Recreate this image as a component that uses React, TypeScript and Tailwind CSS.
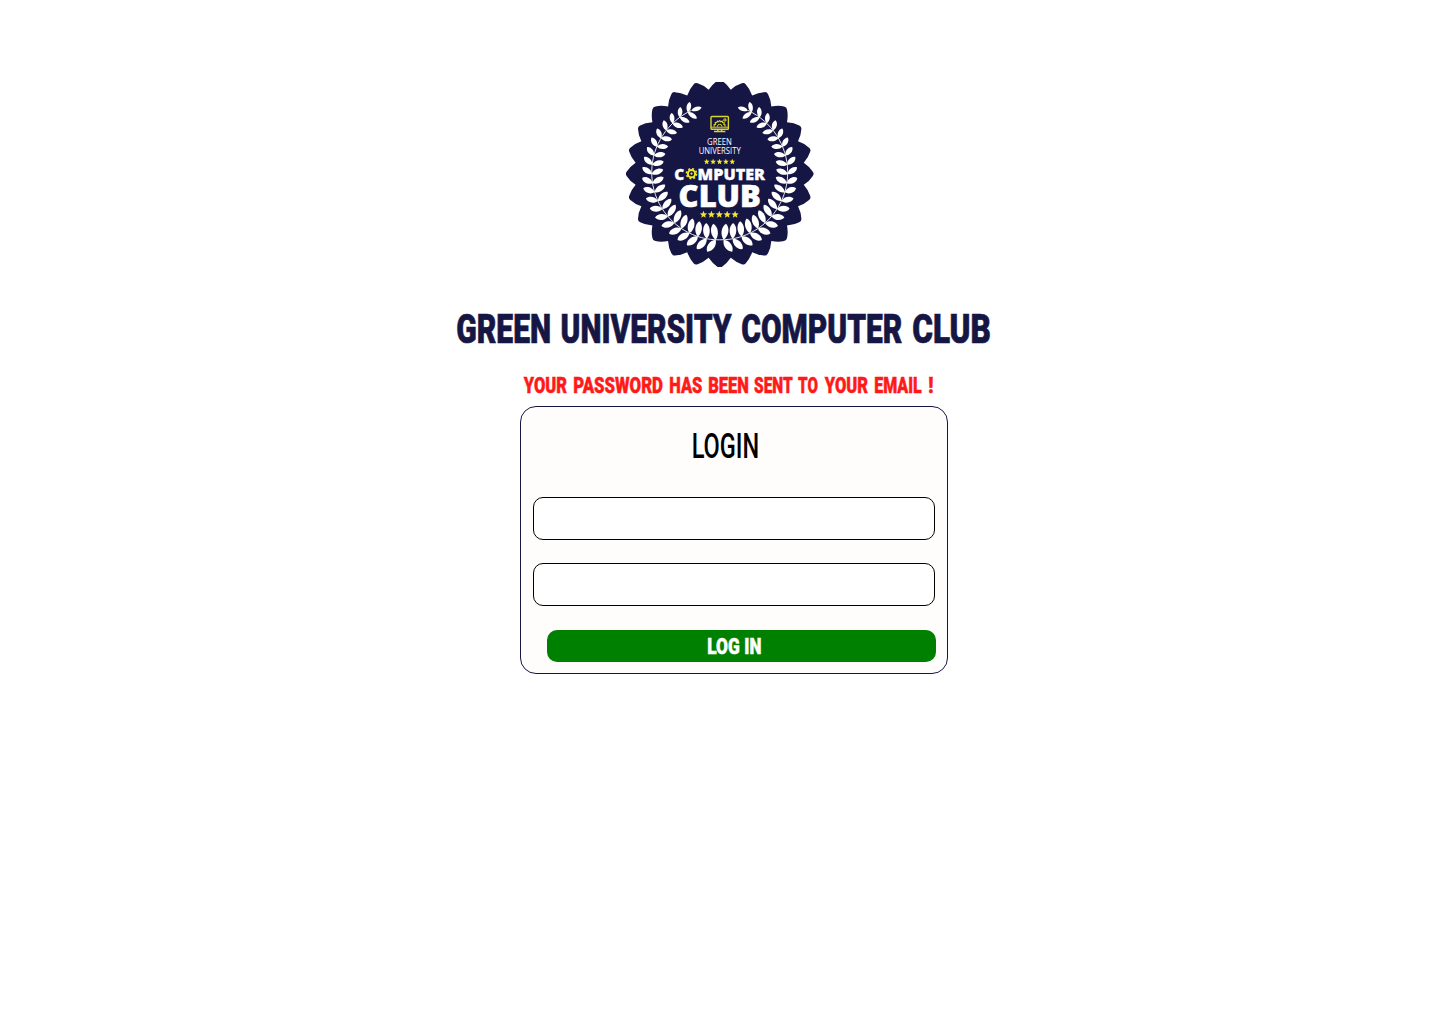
import { useLayoutEffect, useRef } from "react";

type Word = [text: string, width: number, gap?: number];

/** A word squeezed horizontally so that its ink fills exactly `width` pixels. */
function CondensedWord({ text, width, gap = 0 }: { text: string; width: number; gap?: number }) {
  const ref = useRef<HTMLSpanElement>(null);
  useLayoutEffect(() => {
    const el = ref.current;
    const ctx = document.createElement("canvas").getContext("2d");
    if (!el || !ctx) return;
    const cs = getComputedStyle(el);
    ctx.font = `${cs.fontWeight} ${cs.fontSize} ${cs.fontFamily}`;
    const m = ctx.measureText(text);
    const scale = width / (m.actualBoundingBoxLeft + m.actualBoundingBoxRight);
    el.style.transform = `translateX(${m.actualBoundingBoxLeft * scale}px) scaleX(${scale})`;
  }, [text, width]);
  return (
    <span className="block shrink-0" style={{ width, marginLeft: gap }}>
      <span ref={ref} className="block w-max origin-left whitespace-nowrap">
        {text}
      </span>
    </span>
  );
}

function CondensedLine({ words, className }: { words: Word[]; className: string }) {
  return (
    <span className={`flex font-[Roboto,sans-serif] leading-none ${className}`}>
      {words.map(([text, width, gap], i) => (
        <CondensedWord key={i} text={text} width={width} gap={gap} />
      ))}
    </span>
  );
}

const CX = 99.7;
const CY = 97.8;

const polar = (r: number, deg: number) => {
  const a = (deg * Math.PI) / 180;
  return `${(CX + r * Math.sin(a)).toFixed(2)} ${(CY - r * Math.cos(a)).toFixed(2)}`;
};

const sealPath =
  `M${polar(84.8, -7.5)}` +
  Array.from({ length: 24 }, (_, i) => {
    const a = i * 15;
    return `Q${polar(90.4, a - 4.4)} ${polar(93.1, a - 1.3)}Q${polar(94.7, a)} ${polar(93.1, a + 1.3)}Q${polar(90.4, a + 4.4)} ${polar(84.8, a + 7.5)}`;
  }).join("") +
  "Z";

function leaf(x: number, y: number, dir: number, len: number, w: number) {
  return (
    <path
      key={`${x}-${y}-${dir}`}
      d={`M0 0C${len * 0.25} ${-w} ${len * 0.8} ${-w} ${len} 0C${len * 0.8} ${w} ${len * 0.25} ${w} 0 0Z`}
      transform={`translate(${x.toFixed(2)} ${y.toFixed(2)}) rotate(${dir.toFixed(1)})`}
    />
  );
}

/** Left laurel branch; angles run clockwise from the bottom of the seal. */
function Branch() {
  const leaves = [];
  const count = 20;
  const at = (deg: number) => {
    const a = (deg * Math.PI) / 180;
    const r = 66 + (deg / 160) * 3.5;
    return [CX - r * Math.sin(a), CY + r * Math.cos(a)];
  };
  for (let i = 0; i < count; i++) {
    const deg = 3.5 + i * 7.85;
    const t = i / (count - 1);
    const [x, y] = at(deg);
    const len = 14.6 - 4.2 * Math.min(1, t * 1.3);
    const w = 4.5 - 1.5 * t;
    leaves.push(leaf(x, y, 180 + deg - 58 + 6 * t, len, w));
    leaves.push(leaf(x, y, 180 + deg + 78 - 16 * t, len * (1.1 - 0.05 * t), w));
  }
  const [tx, ty] = at(156);
  leaves.push(leaf(tx, ty, -16, 10.5, 2.8));
  const stem = Array.from({ length: 40 }, (_, i) => at(i * 4).map((v) => v.toFixed(2)).join(" "));
  return (
    <g fill="#fff">
      {leaves}
      <path d={`M${stem.join("L")}`} fill="none" stroke="#fff" strokeWidth="0.9" />
    </g>
  );
}

function Star({ x, y, r }: { x: number; y: number; r: number }) {
  const pts = Array.from({ length: 10 }, (_, i) => {
    const a = (i * Math.PI) / 5;
    const q = i % 2 ? r * 0.45 : r;
    return `${x + q * Math.sin(a)},${y - q * Math.cos(a)}`;
  });
  return <polygon points={pts.join(" ")} fill="#f0e62c" />;
}

function Seal() {
  return (
    <svg viewBox="6 6 188 185" className="block h-[185px] w-[188px]" role="img" aria-label="Green University Computer Club">
      <path d={sealPath} fill="#161644" />
      <Branch />
      <g transform={`translate(${CX * 2} 0) scale(-1 1)`}>
        <Branch />
      </g>
      <g fill="none" stroke="#d9d52e" strokeWidth="1.4">
        <rect x="91" y="40.5" width="17.4" height="12.8" rx="0.8" />
        <path d="M91 51.2H108.4" strokeWidth="1" />
        <path d="M94.2 50.6V48.6L95.5 48.2L95.3 46.6L96.8 46.5L97.4 45.1L98.6 45.8L99.7 44.7L100.8 45.8L102.1 45.1L102.7 46.5L104.2 46.7L103.9 48.3L105 48.8V50.6" strokeWidth="1.2" />
        <path d="M97.4 50.6A2.3 2.3 0 0 1 102 50.6" strokeWidth="1" />
        <circle cx="104.9" cy="43.9" r="1.1" strokeWidth="1.1" />
        <path d="M97.8 53.5V55M101.6 53.5V55M94 55.5H105.4" />
      </g>
      <g className="font-['Open_Sans',sans-serif]" fill="#fff">
        <text x="87.1" y="69.2" fontSize="8.5" fontWeight="500" textLength="24.8" lengthAdjust="spacingAndGlyphs">GREEN</text>
        <text x="78.7" y="78.2" fontSize="8.3" fontWeight="500" textLength="42" lengthAdjust="spacingAndGlyphs">UNIVERSITY</text>
        <g stroke="#fff" strokeWidth="0.3">
          <text x="54.2" y="104" fontSize="15.6" fontWeight="800" textLength="10" lengthAdjust="spacingAndGlyphs">C</text>
          <text x="77.6" y="104" fontSize="15.6" fontWeight="800" textLength="67.4" lengthAdjust="spacingAndGlyphs">MPUTER</text>
          <text x="58.6" y="131.4" fontSize="29.2" fontWeight="800" textLength="82.2" lengthAdjust="spacingAndGlyphs" strokeWidth="0.6">CLUB</text>
        </g>
      </g>
      <g fill="none" stroke="#f0e62c">
        <circle cx="71.5" cy="97.7" r="3.6" strokeWidth="2" />
        <circle cx="71.5" cy="97.7" r="5.1" strokeWidth="1.5" strokeDasharray="2 2.005" />
        <circle cx="71.5" cy="97.7" r="1.1" fill="#f0e62c" stroke="none" />
      </g>
      {[0, 1, 2, 3, 4].map((i) => (
        <g key={i}>
          <Star x={86.7 + i * 6.4} y={85.8} r={3} />
          <Star x={83.5 + i * 7.9} y={138.6} r={3.8} />
        </g>
      ))}
    </svg>
  );
}

export default function App() {
  return (
    <main className="flex min-h-screen w-[1440px] flex-col bg-white">
      <div className="ml-[626px] pt-[82px]">
        <Seal />
      </div>
      <h1 className="mt-[42px] ml-[457px] h-[41px] text-[#161644]">
        <CondensedLine
          className="text-[40.5px] font-black [-webkit-text-stroke:0.7px_#161644]"
          words={[["GREEN", 93], ["UNIVERSITY", 170, 11.5], ["COMPUTER", 160, 10.5], ["CLUB", 77, 11]]}
        />
      </h1>
      <p className="mt-[25px] ml-[523px] h-[31px] text-[#ff1a1a]">
        <CondensedLine
          className="text-[21.5px] font-black [-webkit-text-stroke:0.5px_#ff1a1a]"
          words={[
            ["YOUR", 44],
            ["PASSWORD", 89, 7],
            ["HAS", 32, 7],
            ["BEEN", 39, 7],
            ["SENT", 39, 6],
            ["TO", 20, 5],
            ["YOUR", 44, 6],
            ["EMAIL", 47, 7],
            ["!", 3.5, 6.5],
          ]}
        />
      </p>
      <form
        className="ml-[520px] flex h-[268px] w-[428px] flex-col rounded-2xl border border-[#161644] bg-[#fffdfb] px-3"
        onSubmit={(e) => e.preventDefault()}
      >
        <h2 className="mt-[22px] ml-[159.5px] h-[35px] text-black">
          <CondensedLine className="text-[34.5px] font-medium" words={[["LOGIN", 64.5]]} />
        </h2>
        <input type="text" aria-label="Email" className="mt-[33px] h-[43px] w-[402px] shrink-0 rounded-[10px] border border-black bg-white px-3 outline-none" />
        <input type="password" aria-label="Password" className="mt-[23px] h-[43px] w-[402px] shrink-0 rounded-[10px] border border-black bg-white px-3 outline-none" />
        <button type="submit" className="mt-6 ml-[14px] flex h-8 w-[389px] shrink-0 items-center rounded-[10px] bg-[#008000] pt-0.5 pl-[161px] text-white">
          <CondensedLine className="text-[22px] font-black [-webkit-text-stroke:0.5px_#fff]" words={[["LOG", 31], ["IN", 16, 6]]} />
        </button>
      </form>
    </main>
  );
}
